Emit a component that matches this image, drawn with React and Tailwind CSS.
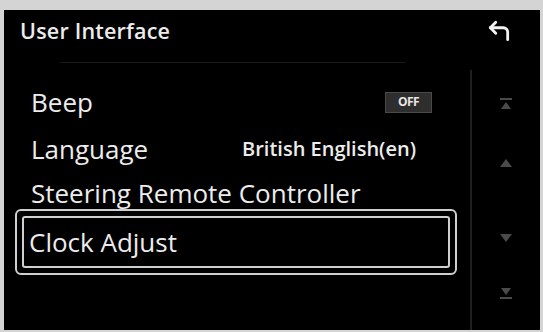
import { CornerUpLeft } from "lucide-react";

const font = { fontFamily: '"Open Sans", "Noto Sans", sans-serif' };

function ScrollIcon({ kind }) {
  return (
    <svg width="14" height="14" viewBox="0 0 14 14" className="text-[#4a4a4a]">
      {kind === "top" && (
        <>
          <rect x="1" y="1" width="12" height="2" fill="currentColor" />
          <path d="M7 5 L12 12 L2 12 Z" fill="currentColor" />
        </>
      )}
      {kind === "up" && <path d="M7 3 L13 11 L1 11 Z" fill="currentColor" />}
      {kind === "down" && <path d="M1 3 L13 3 L7 11 Z" fill="currentColor" />}
      {kind === "bottom" && (
        <>
          <path d="M2 2 L12 2 L7 9 Z" fill="currentColor" />
          <rect x="1" y="11" width="12" height="2" fill="currentColor" />
        </>
      )}
    </svg>
  );
}

export default function App() {
  return (
    <div
      className="w-[543px] h-[332px] bg-[#d4d4d4] pt-[10px] pl-[4px] pr-[3px] pb-[2px] overflow-hidden"
      style={font}
    >
      <div className="flex h-full flex-col bg-black text-[#ececec]">
        {/* Header */}
        <div className="flex h-[42px] items-center justify-between pl-[16px] pr-[28px]">
          <span className="text-[21.5px] font-semibold leading-none tracking-[0.2px]">
            User Interface
          </span>
          <CornerUpLeft className="h-[26px] w-[26px] text-[#f2f2f2]" strokeWidth={2.6} />
        </div>

        <div className="flex flex-1">
          {/* List */}
          <div className="flex-1 pt-[10px]">
            <div className="ml-[56px] mr-[64px] h-px bg-[#181818]" />
            <div className="pt-[16px]">
              <div className="flex h-[46px] items-center justify-between pl-[27px] pr-[38px]">
                <span className="text-[26px] font-medium leading-none">Beep</span>
                <span className="flex h-[21px] w-[47px] items-center justify-center border border-[#4a4a4a] bg-[#2e2e2e] text-[12px] font-bold tracking-[-0.5px] text-[#e6e6e6]">
                  OFF
                </span>
              </div>
              <div className="flex h-[47px] items-center justify-between pl-[27px] pr-[54px]">
                <span className="text-[26px] font-medium leading-none">Language</span>
                <span className="text-[20px] font-semibold leading-none">
                  British English(en)
                </span>
              </div>
              <div className="flex h-[37px] items-start pl-[27px] pt-[6px]">
                <span className="text-[26px] font-medium leading-[30px]">
                  Steering Remote Controller
                </span>
              </div>
              <div className="ml-[11px] mr-[13px] h-[66px] rounded-[6px] border-2 border-[#cfcfcf] p-[5px]">
                <div className="flex h-full items-center rounded-[3px] border-2 border-[#cfcfcf] pl-[5px]">
                  <span className="text-[26px] font-medium leading-none">Clock Adjust</span>
                </div>
              </div>
            </div>
          </div>

          {/* Scroll column */}
          <div className="mt-[18px] w-[2px] bg-[#1f1f1f]" />
          <div className="flex w-[68px] flex-col items-center pt-[45px]">
            <ScrollIcon kind="top" />
            <div className="h-[45px]" />
            <ScrollIcon kind="up" />
            <div className="h-[61px]" />
            <ScrollIcon kind="down" />
            <div className="h-[41px]" />
            <ScrollIcon kind="bottom" />
          </div>
        </div>
      </div>
    </div>
  );
}
